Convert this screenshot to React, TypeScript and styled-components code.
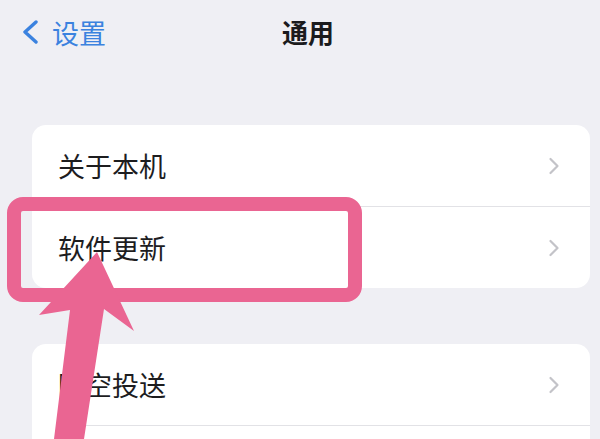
import React from 'react';
import styled, { createGlobalStyle } from 'styled-components';

// style
const GlobalStyle = createGlobalStyle`
  html, body {
    margin: 0;
    padding: 0;
    background-color: #efeff4;
    overflow: hidden;
  }
  body {
    font-family: "Noto Sans CJK SC", "Noto Sans", sans-serif;
  }
`;

const Screen = styled.div`
  position: relative;
  width: 600px;
  height: 439px;
  overflow: hidden;
  background-color: #efeff4;
`;

const NavBar = styled.header`
  display: grid;
  grid-template-columns: 1fr auto 1fr;
  align-items: center;
  height: 64px;
  padding-left: 16px;
`;

const BackButton = styled.button`
  justify-self: start;
  display: flex;
  align-items: center;
  gap: 13px;
  margin: 0 0 0 5px;
  padding: 0;
  border: none;
  background: none;
  color: #3b82df;
  font-family: inherit;
  font-size: 27px;
  line-height: 1;
`;

const Title = styled.h1`
  margin: 0;
  font-size: 26px;
  font-weight: 700;
  color: #1b1b1d;
  line-height: 1;
`;

const Content = styled.main`
  display: flex;
  flex-direction: column;
  gap: 56px;
  padding: 61px 10px 0 32px;
`;

const Card = styled.ul`
  margin: 0;
  padding: 0;
  list-style: none;
  border-radius: 14px;
  background-color: #ffffff;
  overflow: hidden;
`;

const Row = styled.li`
  padding-left: 26px;
`;

const RowInner = styled.div<{ $divider: boolean }>`
  display: flex;
  align-items: center;
  justify-content: space-between;
  height: 81px;
  padding-right: 30px;
  border-top: ${(props) => (props.$divider ? '1px solid #e2e2e6' : 'none')};
  font-size: 27px;
  color: #1d1d1f;
`;

const Highlight = styled.div`
  position: absolute;
  left: 7px;
  top: 197px;
  width: 355px;
  height: 105px;
  box-sizing: border-box;
  border: 14px solid #ea6592;
  border-radius: 16px;
  pointer-events: none;
`;

const ArrowLayer = styled.svg`
  position: absolute;
  left: 0;
  top: 0;
  pointer-events: none;
`;

// data
// the last row of the second group runs past the bottom edge, so its label is not shown
const groups: string[][] = [
  ['关于本机', '软件更新'],
  ['隔空投送', ''],
];

function Chevron() {
  return (
    <svg width="12" height="18" viewBox="0 0 12 18" fill="none">
      <path
        d="M2.5 2 L9.5 9 L2.5 16"
        stroke="#c3c3c8"
        strokeWidth="2.2"
        strokeLinecap="round"
        strokeLinejoin="round"
      />
    </svg>
  );
}

function App() {
  return (
    <Screen>
      <GlobalStyle />
      <NavBar>
        <BackButton>
          <svg width="18" height="24" viewBox="0 0 18 24" fill="none">
            <path
              d="M15 2 L4 12 L15 22"
              stroke="#3b82df"
              strokeWidth="3.4"
              strokeLinecap="round"
              strokeLinejoin="round"
            />
          </svg>
          设置
        </BackButton>
        <Title>通用</Title>
      </NavBar>
      <Content>
        {groups.map((items, gi) => (
          <Card key={gi}>
            {items.map((label, i) => (
              <Row key={i}>
                <RowInner $divider={i > 0}>
                  {label && <span>{label}</span>}
                  {label && <Chevron />}
                </RowInner>
              </Row>
            ))}
          </Card>
        ))}
      </Content>
      <Highlight />
      <ArrowLayer width="600" height="439" viewBox="0 0 600 439">
        <polygon
          points="97,252 134,331 104,309 84,439 54,439 70,310 39,315"
          fill="#ea6592"
          strokeLinejoin="round"
        />
      </ArrowLayer>
    </Screen>
  );
}

export default App;
